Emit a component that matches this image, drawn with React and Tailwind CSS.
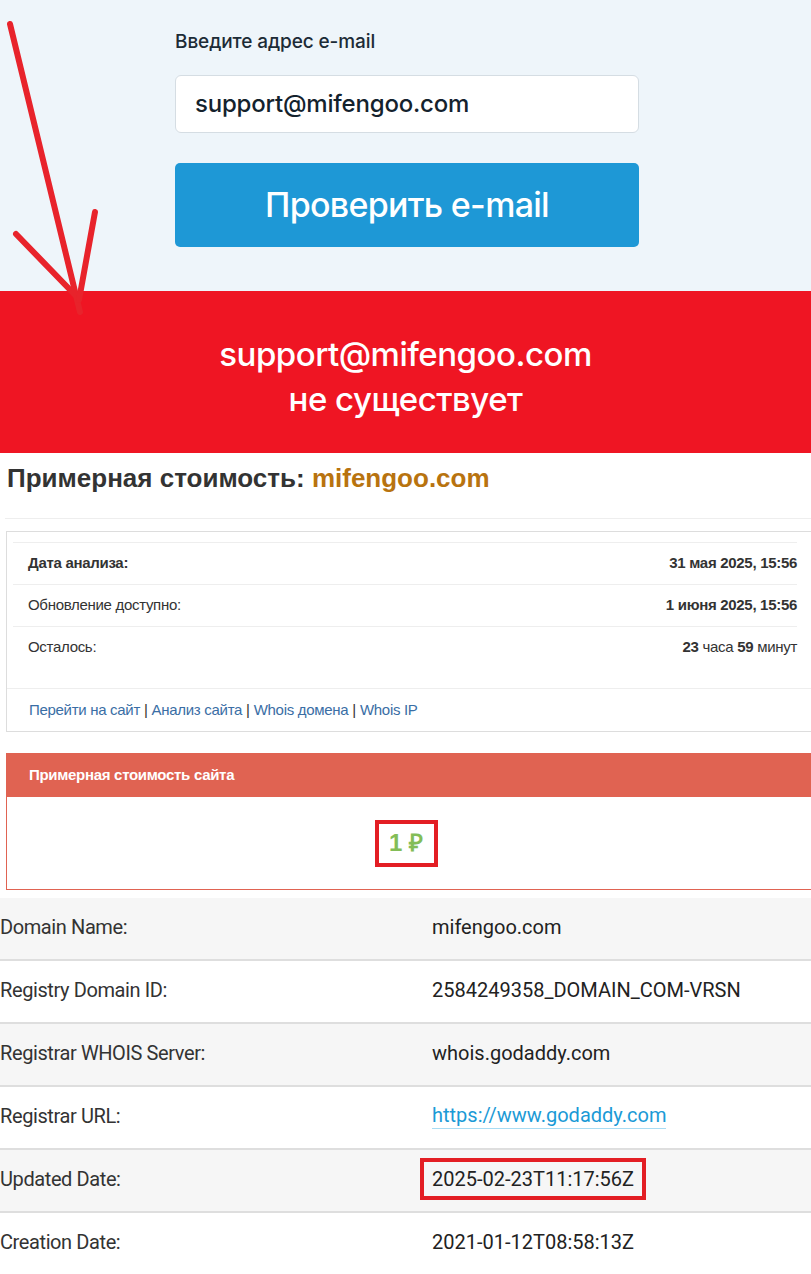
import React from 'react';

const whois = [
  { label: 'Domain Name:', value: 'mifengoo.com' },
  { label: 'Registry Domain ID:', value: '2584249358_DOMAIN_COM-VRSN' },
  { label: 'Registrar WHOIS Server:', value: 'whois.godaddy.com' },
  { label: 'Registrar URL:', value: 'https://www.godaddy.com', link: true },
  { label: 'Updated Date:', value: '2025-02-23T11:17:56Z', marked: true },
  { label: 'Creation Date:', value: '2021-01-12T08:58:13Z' },
];

function Arrow() {
  return (
    <svg className="absolute left-0 top-0 z-10" width="110" height="320" viewBox="0 0 110 320" fill="none">
      <g stroke="#e8232b" strokeWidth="6" strokeLinecap="round">
        <path d="M10 24 L80 312" />
        <path d="M16 234 L78 298" />
        <path d="M95 212 L79 300" />
      </g>
    </svg>
  );
}

export default function App() {
  return (
    <div className="relative w-[811px] overflow-hidden bg-white">
      <Arrow />

      {/* email check form */}
      <div className="h-[291px] bg-[#eef5fa] pt-[29px] font-['Inter',sans-serif]">
        <div className="ml-[175px] w-[464px]">
          <div className="h-[26px] text-[19px] font-medium leading-[26px] tracking-[-0.1px] text-[#1c2b36]">Введите адрес e-mail</div>
          <div className="mt-[20px] flex h-[58px] items-center rounded-[6px] border border-[#d5dde3] bg-white px-[19px] text-[24px] font-medium tracking-[-0.2px] text-[#14222d]">
            support@mifengoo.com
          </div>
          <button className="mt-[30px] flex h-[84px] w-full items-center justify-center rounded-[5px] bg-[#1e98d6] pb-[2px] text-[34px] font-medium tracking-[-0.7px] text-white">
            Проверить e-mail
          </button>
        </div>
      </div>

      {/* result */}
      <div className="flex h-[162px] flex-col items-center justify-center bg-[#ef1523] pt-[10px] font-['Inter',sans-serif] text-[33px] font-medium leading-[45px] tracking-[-0.5px] text-white">
        <div>support@mifengoo.com</div>
        <div>не существует</div>
      </div>

      {/* site value */}
      <div className="font-['Liberation_Sans',Arial,sans-serif]">
        <h1 className="pl-[7px] pt-[11px] text-[26px] font-bold leading-[28px] text-[#333]">
          Примерная стоимость: <span className="text-[#b8730f]">mifengoo.com</span>
        </h1>
        <div className="ml-[5px] mt-[26px] border-t border-[#eee]" />

        <div className="ml-[6px] mt-[12px] border border-r-0 border-[#ddd]">
          <div className="ml-[6px] mr-[14px] mt-[10px] text-[15px] tracking-[-0.3px] text-[#333]">
            <div className="flex h-[42px] items-center justify-between border-t border-[#eee] pl-[15px]">
              <span className="font-bold">Дата анализа:</span>
              <span className="font-bold">31 мая 2025, 15:56</span>
            </div>
            <div className="flex h-[42px] items-center justify-between border-t border-[#eee] pl-[15px]">
              <span>Обновление доступно:</span>
              <span className="font-bold">1 июня 2025, 15:56</span>
            </div>
            <div className="flex h-[42px] items-center justify-between border-t border-[#eee] pl-[15px]">
              <span>Осталось:</span>
              <span><b>23</b> часа <b>59</b> минут</span>
            </div>
          </div>
          <div className="mt-[20px] flex h-[43px] items-center border-t border-[#eee] pl-[22px] text-[15px] tracking-[-0.3px] text-[#333]">
            <span className="text-[#3a6ea5]">Перейти на сайт</span>
            <span className="px-[4px]">|</span>
            <span className="text-[#3a6ea5]">Анализ сайта</span>
            <span className="px-[4px]">|</span>
            <span className="text-[#3a6ea5]">Whois домена</span>
            <span className="px-[4px]">|</span>
            <span className="text-[#3a6ea5]">Whois IP</span>
          </div>
        </div>

        <div className="ml-[6px] mt-[21px] border border-r-0 border-[#e06352]">
          <div className="flex h-[43px] items-center bg-[#e06352] pl-[22px] text-[15px] font-bold tracking-[-0.3px] text-white">
            Примерная стоимость сайта
          </div>
          <div className="flex h-[92px] items-center justify-center pr-[6px]">
            <div className="flex h-[47px] w-[63px] items-center justify-center border-[4px] border-[#e31e24] text-[24px] font-bold text-[#83bd57]">
              1 ₽
            </div>
          </div>
        </div>
      </div>

      {/* whois */}
      <div className="mt-[8px] font-['Roboto',sans-serif] text-[20px] text-[#222]">
        {whois.map((row, i) => (
          <div
            key={row.label}
            className={`flex h-[63px] items-center border-b-2 border-[#dedede] pb-[4px] ${i % 2 === 0 ? 'bg-[#f6f6f6]' : 'bg-white'}`}
          >
            <div className="w-[432px] tracking-[-0.4px] text-[#333]">{row.label}</div>
            {row.link ? (
              <span className="border-b border-[#a9dcf3] leading-[26px] text-[#1b9ad6]">{row.value}</span>
            ) : row.marked ? (
              <span className="-ml-[12px] border-[4px] border-[#e31e24] px-[8px] py-[2px] leading-[30px]">{row.value}</span>
            ) : (
              <span>{row.value}</span>
            )}
          </div>
        ))}
      </div>
    </div>
  );
}
